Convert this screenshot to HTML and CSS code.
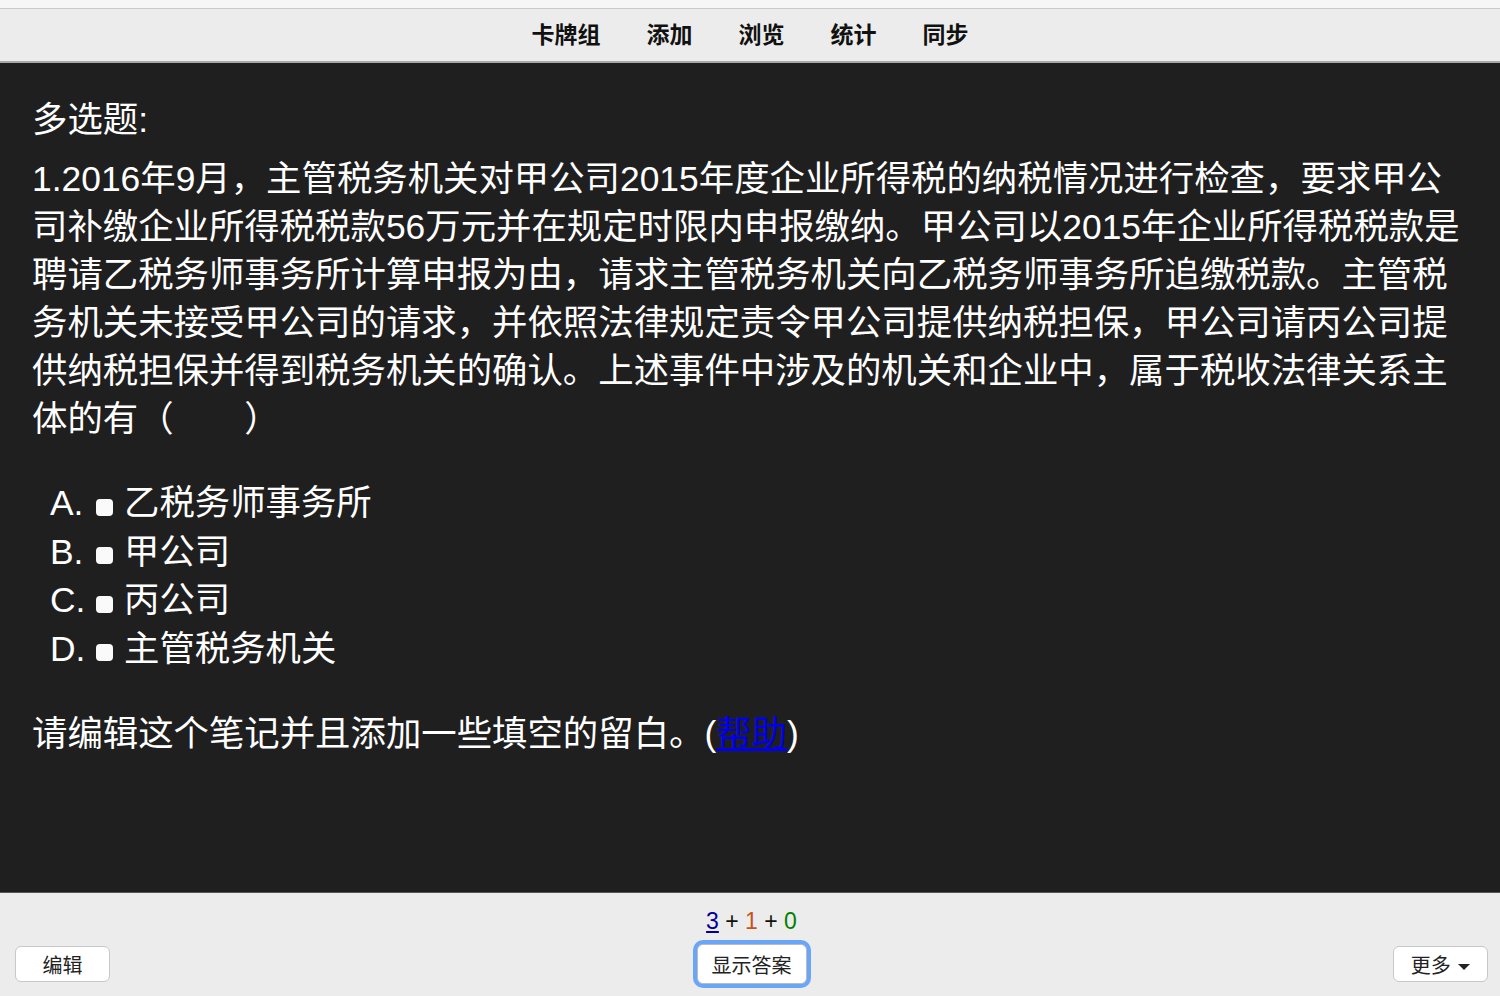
FILE: index.html
```html
<!DOCTYPE html>
<html lang="zh-CN">
<head>
    <meta charset="UTF-8">
    <meta name="viewport" content="width=device-width, initial-scale=1.0">
    <title>Anki</title>
    <link rel="stylesheet" href="styles.css">
</head>
<body>
    <div class="topstrip"></div>

    <div class="toolbar">
        <a href="#" class="tool">卡牌组</a>
        <a href="#" class="tool">添加</a>
        <a href="#" class="tool">浏览</a>
        <a href="#" class="tool">统计</a>
        <a href="#" class="tool">同步</a>
    </div>

    <div class="card">
        <div class="kind">多选题:</div>
        <div class="question">1.2016年9月，主管税务机关对甲公司2015年度企业所得税的纳税情况进行检查，要求甲公司补缴企业所得税税款56万元并在规定时限内申报缴纳。甲公司以2015年企业所得税税款是聘请乙税务师事务所计算申报为由，请求主管税务机关向乙税务师事务所追缴税款。主管税务机关未接受甲公司的请求，并依照法律规定责令甲公司提供纳税担保，甲公司请丙公司提供纳税担保并得到税务机关的确认。上述事件中涉及的机关和企业中，属于税收法律关系主体的有（　　）</div>

        <ul class="options">
            <li><span class="letter">A.</span><span class="box"></span>乙税务师事务所</li>
            <li><span class="letter">B.</span><span class="box"></span>甲公司</li>
            <li><span class="letter">C.</span><span class="box"></span>丙公司</li>
            <li><span class="letter">D.</span><span class="box"></span>主管税务机关</li>
        </ul>

        <div class="note">请编辑这个笔记并且添加一些填空的留白。(<a href="#" class="help">帮助</a>)</div>
    </div>

    <div class="bottombar">
        <div class="side">
            <button class="btn">编辑</button>
        </div>
        <div class="middle">
            <div class="counts">
                <a href="#" class="new">3</a> + <span class="learn">1</span> + <span class="review">0</span>
            </div>
            <button class="btn btn-focus">显示答案</button>
        </div>
        <div class="side side-right">
            <button class="btn">更多 <span class="caret"></span></button>
        </div>
    </div>
</body>
</html>
```

FILE: styles.css
```css
* {
    box-sizing: border-box;
}

html, body {
    margin: 0;
    padding: 0;
}

body {
    font-family: "Liberation Sans", "Noto Sans CJK SC", sans-serif;
    display: flex;
    flex-direction: column;
    height: 100vh;
    overflow: hidden;
    background-color: #ececec;
}

.topstrip {
    height: 9px;
    background-color: #f6f6f6;
    border-bottom: 1px solid #c9c9c9;
}

.toolbar {
    height: 54px;
    display: flex;
    justify-content: center;
    align-items: center;
    padding-bottom: 4px;
    background-color: #ececec;
    border-bottom: 2px solid #a9a9a9;
}

.tool {
    font-size: 23px;
    font-weight: bold;
    color: #111;
    text-decoration: none;
    padding: 0 23px;
}

.card {
    flex: 1;
    background-color: #1f1f1f;
    color: #fff;
    font-size: 35.4px;
    line-height: 48px;
    padding: 33px 30px 0 32px;
    border-bottom: 1px solid #555;
}

.kind {
    margin-bottom: 11px;
}

.options {
    list-style: none;
    margin: 36px 0 0 0;
    padding: 0 0 0 18px;
}

.options li {
    display: flex;
    align-items: center;
    height: 48.5px;
}

.letter {
    display: inline-block;
    width: 46px;
}

.box {
    display: inline-block;
    width: 17px;
    height: 17px;
    background-color: #fafafa;
    border-radius: 4px;
    margin-right: 11px;
    margin-top: 8px;
}

.note {
    margin-top: 37px;
}

.help {
    color: #0000ee;
}

.bottombar {
    height: 103px;
    flex-shrink: 0;
    display: flex;
    align-items: flex-end;
    padding: 0 12px 12px 15px;
    background-color: #ececec;
}

.side {
    flex: 1;
    display: flex;
}

.side-right {
    justify-content: flex-end;
}

.middle {
    display: flex;
    flex-direction: column;
    align-items: center;
}

.counts {
    font-size: 23px;
    color: #111;
    margin-bottom: 9px;
}

.new {
    color: #000099;
}

.learn {
    color: #c35617;
}

.review {
    color: #008000;
}

.btn {
    font-family: "Liberation Sans", "Noto Sans CJK SC", sans-serif;
    font-size: 20px;
    color: #222;
    background-color: #fff;
    border: 1px solid #c8c8c8;
    border-radius: 6px;
    height: 36px;
    width: 95px;
    padding: 0;
    margin-bottom: 2px;
}

.btn-focus {
    width: 110px;
    height: 40px;
    border-color: #bbb;
    box-shadow: 0 0 0 4px #6aa6f7;
    margin-bottom: 0;
}

.caret {
    display: inline-block;
    width: 0;
    height: 0;
    border-left: 6px solid transparent;
    border-right: 6px solid transparent;
    border-top: 6px solid #222;
    vertical-align: middle;
    margin-left: 2px;
}
```
